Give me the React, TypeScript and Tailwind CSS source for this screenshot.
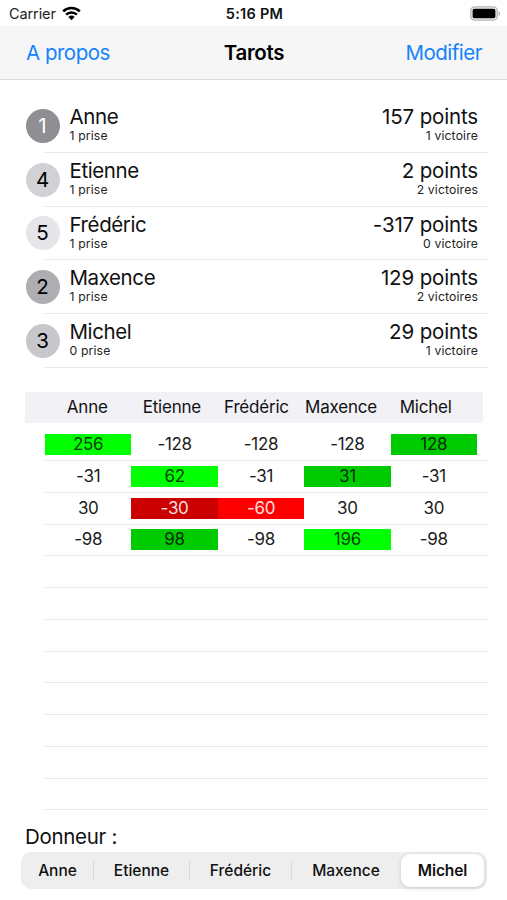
interface Player {
  name: string;
  rank: number;
  points: number;
  prises: number;
  victoires: number;
  badge: string;
  tab: string;
}

interface Cell {
  value: number;
  role?: "taker" | "partner";
}

const players: Player[] = [
  { name: "Anne", rank: 1, points: 157, prises: 1, victoires: 1, badge: "bg-[#8e8e93] text-white", tab: "w-[72px]" },
  { name: "Etienne", rank: 4, points: 2, prises: 1, victoires: 2, badge: "bg-[#d1d1d6] text-black", tab: "w-[96px]" },
  { name: "Frédéric", rank: 5, points: -317, prises: 1, victoires: 0, badge: "bg-[#e5e5ea] text-black", tab: "w-[102px]" },
  { name: "Maxence", rank: 2, points: 129, prises: 1, victoires: 2, badge: "bg-[#aeaeb2] text-black", tab: "w-[108px]" },
  { name: "Michel", rank: 3, points: 29, prises: 0, victoires: 1, badge: "bg-[#c7c7cc] text-black", tab: "w-[83px]" },
];

const rounds: Cell[][] = [
  [{ value: 256, role: "taker" }, { value: -128 }, { value: -128 }, { value: -128 }, { value: 128, role: "partner" }],
  [{ value: -31 }, { value: 62, role: "taker" }, { value: -31 }, { value: 31, role: "partner" }, { value: -31 }],
  [{ value: 30 }, { value: -30, role: "partner" }, { value: -60, role: "taker" }, { value: 30 }, { value: 30 }],
  [{ value: -98 }, { value: 98, role: "partner" }, { value: -98 }, { value: 196, role: "taker" }, { value: -98 }],
];

const emptyRows = Array.from({ length: 8 }, (_, i) => i);
const dealer = "Michel";

const getCellColor = ({ value, role }: Cell) => {
  if (!role) return "text-[#1c1c1c]";
  if (role === "taker") return value > 0 ? "bg-[#00ff00] text-[#063c06]" : "bg-[#ff0000] text-[#ffe0e0]";
  return value > 0 ? "bg-[#00cb00] text-[#052e05]" : "bg-[#cb0000] text-[#ffdede]";
};

const plural = (count: number, word: string) => `${count} ${word}${count > 1 ? "s" : ""}`;

function StatusBar() {
  return (
    <div className="grid h-[26px] grid-cols-3 items-center pl-[9px] pr-[7px] pt-[2px] text-[14.5px] leading-none">
      <div className="flex items-center gap-[6px]">
        <span className="tracking-[-0.1px] text-[#222]">Carrier</span>
        <svg width="19" height="15" viewBox="0 0 19 15" className="-mt-[2px]" fill="none" stroke="black">
          <path d="M1.2 5.4a12 12 0 0 1 16.6 0" strokeWidth="2.6" />
          <path d="M4.1 8.6a7.8 7.8 0 0 1 10.8 0" strokeWidth="2.5" />
          <path d="M9.5 14.2 6.4 11a4.5 4.5 0 0 1 6.2 0z" fill="black" stroke="none" />
        </svg>
      </div>
      <span className="text-center font-semibold tracking-[0.25px]">5:16 PM</span>
      <svg width="31" height="15" viewBox="0 0 31 15" className="-mt-[2px] mr-[-1px] justify-self-end">
        <rect x="0.8" y="0.8" width="26.4" height="13.4" rx="4" fill="#f0f0f0" stroke="#b5b5b5" strokeWidth="1.3" />
        <rect x="2.6" y="2.7" width="22.8" height="9.6" rx="1.8" fill="black" />
        <path d="M28.6 5.2c2 .8 2 3.8 0 4.6z" fill="#b0b0b0" />
      </svg>
    </div>
  );
}

function PlayerRow({ player }: { player: Player }) {
  return (
    <li className="flex h-[53.7px]">
      <div className={`z-10 mt-[9.6px] flex size-[34px] shrink-0 items-center justify-center rounded-full pt-px text-[20.5px] ${player.badge}`}>
        {player.rank}
      </div>
      <div className="-ml-[15px] flex flex-1 justify-between border-b border-[#e8e8e9] pl-[25px] pr-[10px] pt-[5px]">
        <div>
          <p className="text-[20.5px] leading-[25px] tracking-[-0.4px]">{player.name}</p>
          <p className="text-[12.2px] leading-[14px] tracking-[0.15px] text-[#222]">{plural(player.prises, "prise")}</p>
        </div>
        <div className="text-right">
          <p className="text-[20.5px] leading-[25px] tracking-[-0.15px]">{player.points} points</p>
          <p className="text-[12.2px] leading-[14px] tracking-[0.15px] text-[#222]">{plural(player.victoires, "victoire")}</p>
        </div>
      </div>
    </li>
  );
}

export default function App() {
  return (
    <main className="flex h-[900px] w-[507px] flex-col overflow-hidden bg-white font-['Inter',sans-serif] text-[#111]">
      <StatusBar />

      {/* Navigation bar */}
      <header className="grid h-[54px] grid-cols-3 items-center border-b border-[#dcdcdd] bg-[#f7f6f7] pl-[26px] pr-[25px] pt-px text-[20.5px] tracking-[-0.5px]">
        <button className="text-left text-[#1482fb]">A propos</button>
        <h1 className="text-center font-semibold tracking-[-0.3px] text-black">Tarots</h1>
        <button className="text-right text-[#1482fb]">Modifier</button>
      </header>

      {/* Ranking */}
      <ul className="mt-[19.3px] pl-[25.5px] pr-[19px]">
        {players.map((player) => (
          <PlayerRow key={player.name} player={player} />
        ))}
      </ul>

      {/* Scores */}
      <section className="mt-[24.2px]">
        <div className="ml-[25px] mr-[24px] flex h-[31px] items-center bg-[#f2f1f6] pl-[20px] text-[17px] tracking-[-0.2px]">
          {players.map(({ name }) => (
            <span key={name} className="w-[84.6px] text-center">{name}</span>
          ))}
        </div>
        <div className="ml-[45px] mr-[19px] mt-[6.5px] text-[17px] tracking-[-0.3px]">
          {rounds.map((round, i) => (
            <div key={i} className="flex h-[31.74px] items-center border-b border-[#e8e8e9]">
              {round.map((cell, j) => (
                <span key={j} className={`h-[21px] w-[86.4px] text-center leading-[21px] ${getCellColor(cell)}`}>
                  {cell.value}
                </span>
              ))}
            </div>
          ))}
          {emptyRows.map((row) => (
            <div key={row} className="h-[31.74px] border-b border-[#e8e8e9]" />
          ))}
        </div>
      </section>

      {/* Dealer */}
      <section className="mt-[13.1px]">
        <h2 className="ml-[25px] h-[29px] text-[20.5px] leading-[28px] tracking-[-0.3px]">Donneur :</h2>
        <div className="ml-[21px] flex h-[37px] w-[466px] items-center rounded-[10px] bg-[#eeeeee] pl-px text-[15.5px] font-medium">
          {players.map(({ name, tab }, i) => (
            <button
              key={name}
              className={`${tab} ${
                name === dealer
                  ? "ml-px h-[33px] rounded-[9px] bg-white font-semibold tracking-[-0.1px] shadow-[0_1px_4px_rgba(0,0,0,0.16)]"
                  : `h-[19px] leading-[19px] ${i < 3 ? "border-r border-[#dadadc]" : ""}`
              }`}
            >
              {name}
            </button>
          ))}
        </div>
      </section>
    </main>
  );
}
